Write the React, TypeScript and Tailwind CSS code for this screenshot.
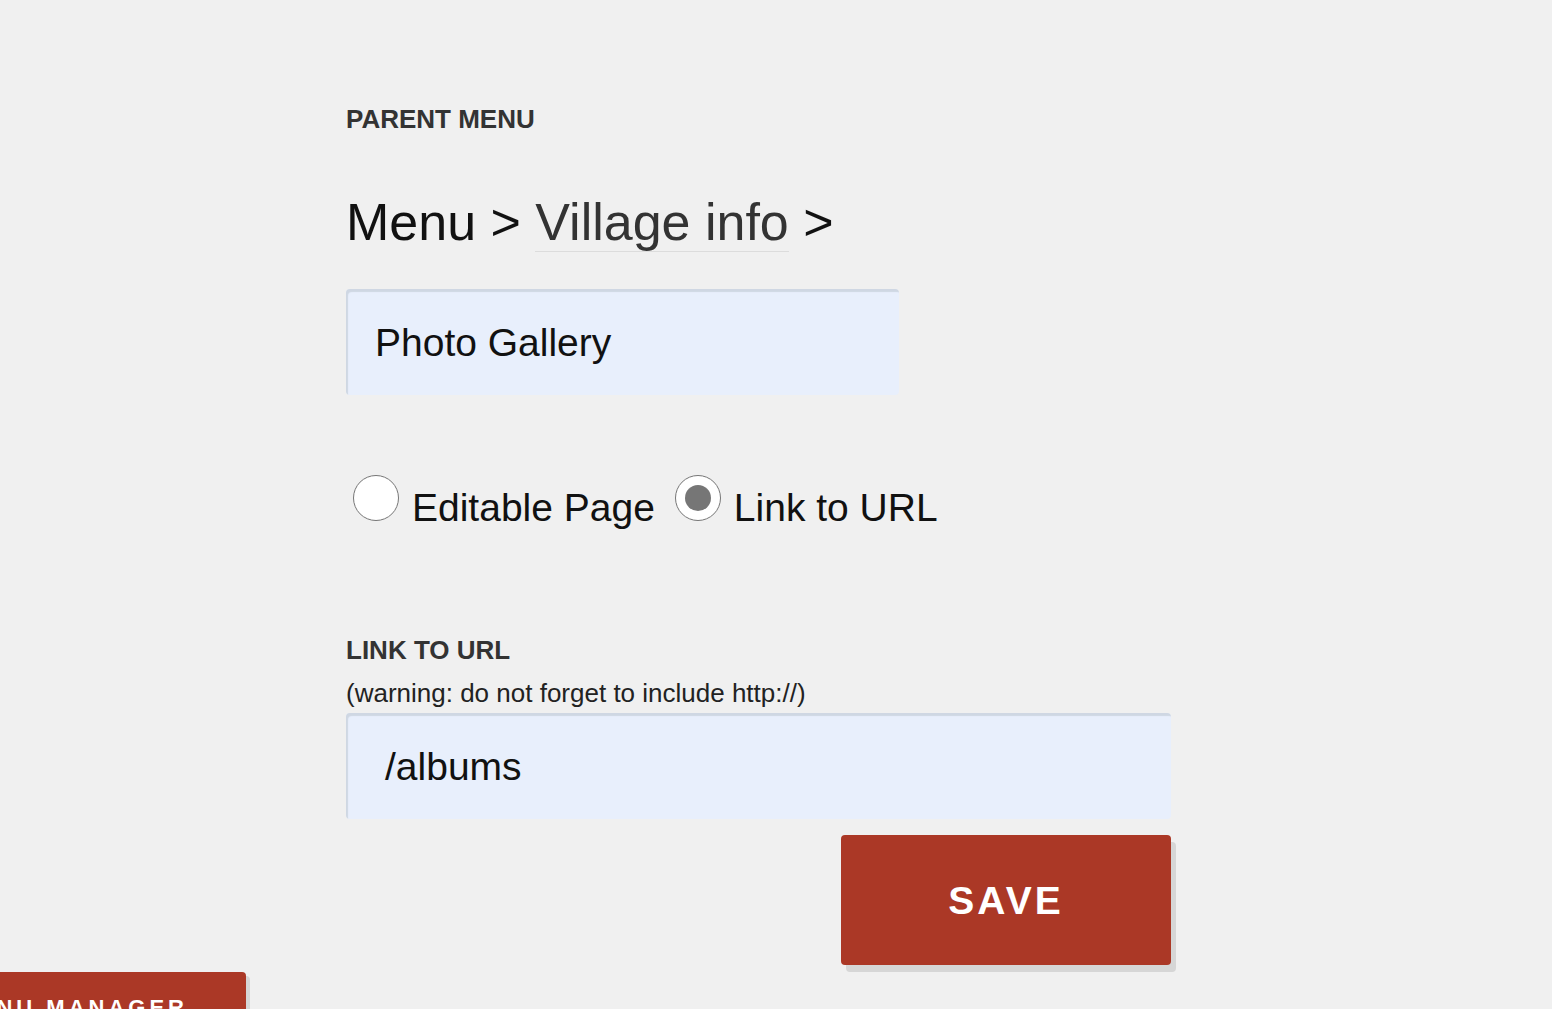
import React from "react";

function Radio({ checked }: { checked?: boolean }) {
  return (
    <span className="flex h-[46px] w-[46px] shrink-0 items-center justify-center rounded-full border border-[#767676] bg-white">
      {checked && <span className="h-[26px] w-[26px] rounded-full bg-[#767676]" />}
    </span>
  );
}

export default function App() {
  return (
    <div className="relative min-h-screen overflow-hidden bg-[#f0f0f0] font-['Liberation_Sans',Arial,sans-serif]">
      <div className="w-[1171px] pl-[346px] pt-[106px]">
        <div className="h-[26px] text-[26px] font-bold leading-none text-[#333]">PARENT MENU</div>

        <div className="mt-[64px] h-[52px] text-[52px] leading-none text-[#111]">
          Menu &gt;{" "}
          <span className="border-b border-[#dcdcdc] text-[#333]">Village info</span> &gt;
        </div>

        <div className="mt-[41px] flex h-[106px] w-[553px] items-center rounded-[4px] bg-[#e8effc] pl-[29px] text-[39px] leading-none text-[#111] shadow-[inset_2px_3px_1px_#cfd7e3]">
          Photo Gallery
        </div>

        <div className="mt-[80px] flex h-[52px] items-start pl-[7px]">
          <Radio />
          <span className="ml-[13px] mt-[13px] text-[39px] leading-none text-[#111]">Editable Page</span>
          <span className="ml-[20px]">
            <Radio checked />
          </span>
          <span className="ml-[13px] mt-[13px] text-[39px] leading-none text-[#111]">Link to URL</span>
        </div>

        <div className="mt-[110px] h-[26px] text-[26px] font-bold leading-none text-[#333]">LINK TO URL</div>
        <div className="mt-[17px] h-[26px] text-[26px] leading-none text-[#222]">
          (warning: do not forget to include http://)
        </div>

        <div className="mt-[7px] flex h-[106px] w-[825px] items-center rounded-[4px] bg-[#e8effc] pl-[39px] text-[39px] leading-none text-[#111] shadow-[inset_2px_3px_1px_#cfd7e3]">
          /albums
        </div>

        <div className="mt-[16px] flex w-[825px] justify-end">
          <button className="flex h-[130px] w-[330px] items-center justify-center rounded-[4px] bg-[#ab3826] text-[39px] font-bold leading-none tracking-[3px] text-white shadow-[5px_7px_0_#d6d6d6]">
            SAVE
          </button>
        </div>
      </div>

      <div className="absolute left-[-60px] top-[972px] flex h-[80px] w-[306px] justify-end rounded-[4px] bg-[#ab3826] pr-[58px] pt-[25px] text-[22px] font-bold leading-none tracking-[4px] text-white shadow-[4px_4px_0_#d6d6d6]">
        MENU MANAGER
      </div>
    </div>
  );
}
